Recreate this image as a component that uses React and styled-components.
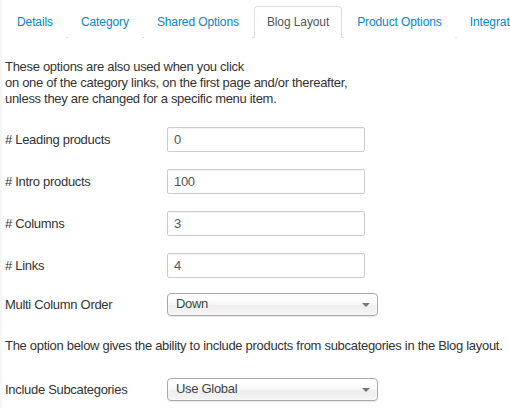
import React from "react";
import styled, { createGlobalStyle } from "styled-components";

const GlobalStyle = createGlobalStyle`
  html, body {
    margin: 0;
    padding: 0;
    background: #fff;
  }
  body {
    font-family: "Liberation Sans", Arial, sans-serif;
    font-size: 13px;
    letter-spacing: -0.3px;
    color: #333;
  }
`;

const Page = styled.div`
  width: 510px;
  height: 408px;
  box-sizing: border-box;
  padding: 6px 0 0 3px;
  border-left: 2px solid #f6f6f6;
  overflow: hidden;
`;

const Tabs = styled.ul`
  display: flex;
  margin: 0 0 0 -1px;
  padding: 0;
  list-style: none;
  border-bottom: 1px solid #ddd;
  white-space: nowrap;
`;

const Tab = styled.li`
  margin: 0 2px -1px 0;
  padding: 6px 12px;
  font-size: 12px;
  letter-spacing: -0.1px;
  line-height: 18px;
  border: 1px solid ${(p) => (p.active ? "#ddd" : "transparent")};
  border-bottom-color: ${(p) => (p.active ? "#fff" : "transparent")};
  border-radius: 4px 4px 0 0;
  background: #fff;
  color: ${(p) => (p.active ? "#555" : "#0088cc")};
  flex-shrink: 0;
`;

const Note = styled.p`
  margin: ${(p) => p.margin};
  line-height: 16px;
  white-space: nowrap;
`;

const Row = styled.div`
  display: flex;
  align-items: center;
  margin-top: ${(p) => p.gap}px;
`;

const Label = styled.div`
  width: 162px;
  flex-shrink: 0;
`;

const Input = styled.div`
  width: 198px;
  height: 25px;
  box-sizing: border-box;
  border: 1px solid #ccc;
  border-radius: 2px;
  padding: 0 6px;
  line-height: 23px;
  color: #555;
  box-shadow: inset 0 1px 1px rgba(0, 0, 0, 0.05);
`;

const Select = styled.div`
  position: relative;
  width: 211px;
  height: 23px;
  box-sizing: border-box;
  border: 1px solid #aaa;
  border-radius: 4px;
  padding: 0 8px;
  line-height: 20px;
  color: #444;
  background: linear-gradient(#fff 20%, #f6f6f6 50%, #eee 52%, #f4f4f4 100%);
  box-shadow: inset 0 0 3px #fff, 0 1px 1px rgba(0, 0, 0, 0.1);
`;

const Caret = styled.span`
  position: absolute;
  right: 7px;
  top: 9px;
  width: 0;
  height: 0;
  border-left: 4px solid transparent;
  border-right: 4px solid transparent;
  border-top: 4px solid #777;
`;

const tabs = [
  "Details",
  "Category",
  "Shared Options",
  "Blog Layout",
  "Product Options",
  "Integration",
];

const fields = [
  ["# Leading products", "0"],
  ["# Intro products", "100"],
  ["# Columns", "3"],
  ["# Links", "4"],
];

export default function App() {
  return (
    <Page>
      <GlobalStyle />
      <Tabs>
        {tabs.map((t) => (
          <Tab key={t} active={t === "Blog Layout"}>
            {t}
          </Tab>
        ))}
      </Tabs>
      <Note margin="21px 0 0">
        These options are also used when you click
        <br />
        on one of the category links, on the first page and/or thereafter,
        <br />
        unless they are changed for a specific menu item.
      </Note>
      {fields.map(([label, value], i) => (
        <Row key={label} gap={i === 0 ? 20 : 17}>
          <Label>{label}</Label>
          <Input>{value}</Input>
        </Row>
      ))}
      <Row gap={15}>
        <Label>Multi Column Order</Label>
        <Select>
          Down
          <Caret />
        </Select>
      </Row>
      <Note margin="22px 0 0">
        The option below gives the ability to include products from
        subcategories in the Blog layout.
      </Note>
      <Row gap={24}>
        <Label>Include Subcategories</Label>
        <Select>
          Use Global
          <Caret />
        </Select>
      </Row>
    </Page>
  );
}
